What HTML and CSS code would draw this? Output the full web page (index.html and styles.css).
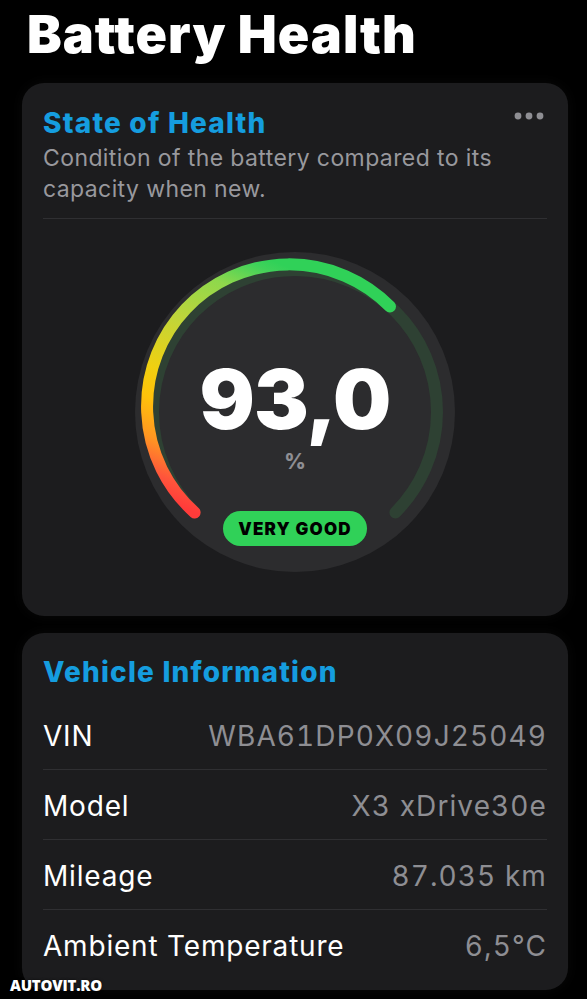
FILE: index.html
```html
<!DOCTYPE html>
<html lang="en">
<head>
<meta charset="utf-8">
<title>Battery Health</title>
<link rel="stylesheet" href="styles.css">
</head>
<body>
<main class="page">
  <h1 class="page-title">Battery Health</h1>

  <section class="card card-soh">
    <div class="card-head">
      <h2 class="card-title">State of Health</h2>
      <svg class="more" width="30" height="8" viewBox="0 0 30 8" aria-hidden="true">
        <circle cx="4" cy="4" r="3.4" fill="#8e8e93"/>
        <circle cx="15" cy="4" r="3.4" fill="#8e8e93"/>
        <circle cx="26" cy="4" r="3.4" fill="#8e8e93"/>
      </svg>
    </div>
    <p class="card-sub">Condition of the battery compared to its capacity when new.</p>
    <div class="divider"></div>

    <div class="gauge">
      <svg class="gauge-svg" width="320" height="320" viewBox="0 0 320 320" aria-hidden="true">
        <defs>
          <linearGradient id="g" gradientUnits="userSpaceOnUse" x1="59.6" y1="260.4" x2="160" y2="18">
            <stop offset="0" stop-color="#ff3b3a"/>
            <stop offset="0.08" stop-color="#ff553b"/>
            <stop offset="0.2" stop-color="#ff9622"/>
            <stop offset="0.34" stop-color="#ffc20a"/>
            <stop offset="0.45" stop-color="#f0d010"/>
            <stop offset="0.66" stop-color="#c0d53a"/>
            <stop offset="0.85" stop-color="#8ed84c"/>
            <stop offset="0.96" stop-color="#40d25a"/>
            <stop offset="1" stop-color="#30d158"/>
          </linearGradient>
        </defs>
        <circle cx="160" cy="160" r="160" fill="#2c2c2e"/>
        <path d="M59.6 260.4 A142 142 0 1 1 260.4 260.4" fill="none" stroke="#2e4133" stroke-width="12" stroke-linecap="round"/>
        <path d="M59.6 260.4 A142 142 0 1 1 255.0 54.5" fill="none" stroke="url(#g)" stroke-width="12" stroke-linecap="round"/>
      </svg>
      <div class="gauge-center">
        <div class="gauge-value">93,0</div>
        <div class="gauge-unit">%</div>
        <div class="badge">VERY GOOD</div>
      </div>
    </div>
  </section>

  <section class="card card-info">
    <h2 class="card-title">Vehicle Information</h2>
    <div class="rows">
      <div class="row"><span class="label">VIN</span><span class="value">WBA61DP0X09J25049</span></div>
      <div class="row"><span class="label">Model</span><span class="value">X3 xDrive30e</span></div>
      <div class="row"><span class="label">Mileage</span><span class="value">87.035 km</span></div>
      <div class="row"><span class="label">Ambient Temperature</span><span class="value">6,5°C</span></div>
    </div>
  </section>

  <div class="watermark">AUTOVIT.RO</div>
</main>
</body>
</html>
```

FILE: styles.css
```css
* { box-sizing: border-box; }

html, body {
  margin: 0;
  padding: 0;
  background: #000;
}

body {
  font-family: Inter, "Noto Sans", "Liberation Sans", sans-serif;
  color: #fff;
  width: 587px;
  height: 999px;
  overflow: hidden;
}

.page {
  position: relative;
  padding: 5px 19px 0 22px;
}

.page-title {
  margin: 0 0 18px 5px;
  font-size: 52px;
  line-height: 60px;
  font-weight: 900;
  letter-spacing: 1px;
  color: #fff;
}

.card {
  background: #1c1c1e;
  border-radius: 22px;
  box-shadow: 0 0 14px rgba(255, 255, 255, 0.035);
}

.card-soh {
  padding: 23px 21px 44px 21px;
}

.card-head {
  display: flex;
  justify-content: space-between;
  align-items: flex-start;
}

.more {
  margin-top: 6px;
  margin-right: 3px;
}

.card-title {
  margin: 0;
  font-size: 28px;
  line-height: 34px;
  font-weight: 800;
  color: #159ddf;
  letter-spacing: 1.2px;
}

.card-sub {
  margin: 3px 0 0 0;
  font-size: 23px;
  line-height: 31px;
  color: #98989d;
  font-weight: 400;
  letter-spacing: 0.4px;
}

.divider {
  height: 1px;
  background: #2f2f32;
  margin-top: 13px;
}

.gauge {
  position: relative;
  width: 320px;
  height: 320px;
  margin: 33px auto 0;
}

.gauge-svg {
  display: block;
}

.gauge-center {
  position: absolute;
  inset: 0;
  display: flex;
  flex-direction: column;
  align-items: center;
  padding-top: 107px;
}

.gauge-value {
  font-size: 82px;
  line-height: 82px;
  font-weight: 900;
  letter-spacing: -1px;
  color: #fff;
}

.gauge-unit {
  margin-top: 10px;
  font-size: 21px;
  line-height: 21px;
  font-weight: 800;
  color: #8e8e93;
}

.badge {
  margin-top: 39px;
  width: 144px;
  height: 35px;
  border-radius: 18px;
  background: #30d158;
  color: #000;
  font-size: 17px;
  font-weight: 900;
  letter-spacing: 1.2px;
  display: flex;
  align-items: center;
  justify-content: center;
}

.card-info {
  margin-top: 17px;
  padding: 22px 21px 11px 21px;
}

.rows {
  margin-top: 11px;
}

.row {
  display: flex;
  justify-content: space-between;
  align-items: flex-start;
  height: 70px;
  padding-top: 20px;
  border-bottom: 1px solid #2f2f32;
}

.row:last-child {
  border-bottom: none;
  height: 69px;
}

.label, .value {
  font-size: 28px;
  line-height: 33px;
  font-weight: 400;
}

.label {
  color: #fff;
  letter-spacing: 0.8px;
}

.value {
  color: #8e8e93;
  letter-spacing: 1.1px;
  font-variant-numeric: tabular-nums;
}

.watermark {
  position: absolute;
  left: 10px;
  top: 975px;
  font-family: "Open Sans", "Noto Sans", sans-serif;
  font-size: 15px;
  font-weight: 800;
  color: #fff;
  letter-spacing: -0.2px;
  text-shadow: 0 0 3px rgba(0, 0, 0, 0.7);
}
```
